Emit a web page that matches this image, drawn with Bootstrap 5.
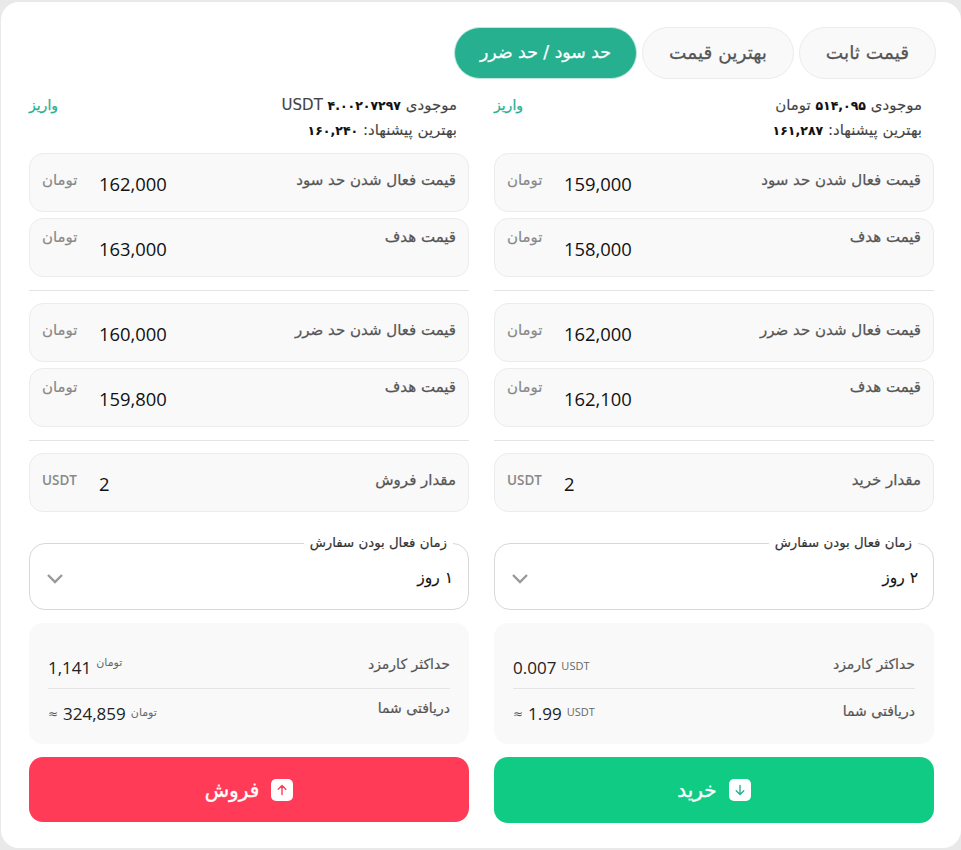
<!DOCTYPE html>
<html lang="fa" dir="rtl">
<head>
<meta charset="utf-8">
<title>سفارش</title>
<link href="https://cdn.jsdelivr.net/npm/bootstrap@5.3.0/dist/css/bootstrap.min.css" rel="stylesheet">
<style>
html,body{height:850px;overflow:hidden}
body{background:#e9e9e9;font-family:"DejaVu Sans","Open Sans",sans-serif;padding:2px 0 2px 1px;color:#444}
.shell{background:#fff;border-radius:18px;height:846px;padding:25px 25px 0 28px}
.tabs{height:52px;margin-bottom:14px;gap:5px}
.tab-pill{height:52px;border-radius:26px;border:1px solid #ececec;background:#f9f9f9;color:#555;font-size:18.5px;-webkit-text-stroke:.25px;display:flex;align-items:center;justify-content:center}
.w-a{width:137px}.w-b{width:152px}.w-c{width:183px}
.tab-pill.on{background:#27b08f;border-color:#bfe6dc;color:#fff;font-size:17.3px}
.trade-row{--bs-gutter-x:25px;margin-right:-10.5px}
.bal{height:48px;font-size:15px;line-height:24px;margin-bottom:12px;padding-right:12px;-webkit-text-stroke:.1px}
.bal b{color:#111;font-size:12.5px}
.bal a{color:#27b08f;text-decoration:none;font-size:14px;-webkit-text-stroke:.25px}
.fld{height:59px;background:#f9f9f9;border:1px solid #ececec;border-radius:14px;padding:0 12px;margin-bottom:6px;color:#555}
.fld-lab{font-size:15px;-webkit-text-stroke:.25px;white-space:nowrap}
.fld-unit{font-size:15px;-webkit-text-stroke:.15px;color:#888;min-width:38px;text-align:left}
.fld-num{font-family:"Open Sans",sans-serif;font-size:18.4px;color:#111;width:68px;direction:ltr;text-align:left;margin-left:19px}
.pad-mid{align-items:center}
.pad-mid .fld-lab,.pad-mid .fld-unit{margin-top:-5px}
.pad-mid .fld-num{margin-top:2px}
.pad-top{padding-top:7px;align-items:flex-start}
.pad-top .fld-num{margin-top:9px}
.fld .usd{font-family:"Open Sans",sans-serif;font-size:13.5px;font-weight:600;-webkit-text-stroke:0}
.rule{border-top:1px solid #e4e4e4;margin:13px 0 12px;height:0}
.time-box{border:1px solid #d8d8d8;border-radius:16px;height:76px;padding:0 15px 0 17px;margin:22px 0 13px;display:block;min-width:0}
.time-box legend{float:none;width:auto;font-size:13.3px;-webkit-text-stroke:.2px;color:#333;margin:0;padding:0 6px;line-height:18px}
.time-val{font-size:15.5px;-webkit-text-stroke:.15px;color:#111;margin-top:15px}
.info{background:#f9f9f9;border-radius:14px;height:121px;padding:24px 19px 0;margin-bottom:13px}
.info-row{height:41px;font-size:14px;-webkit-text-stroke:.2px;color:#555}
.info-row+.info-row{border-top:1px solid #e4e4e4;height:46px}
.info-row+.info-row>.info-gap{padding-top:4px}
.info-num{font-family:"Open Sans",sans-serif;font-size:17px;color:#222;direction:ltr;-webkit-text-stroke:0;line-height:1}
.info-unit{font-size:11px;color:#666;font-family:"Open Sans","DejaVu Sans",sans-serif;-webkit-text-stroke:0;margin-top:-2px}
.info-unit.up{margin-top:-10px}
.lab-up{margin-top:-6px}
.info-approx{font-size:12px;color:#555;-webkit-text-stroke:0}
.info-gap{gap:5px}
.go{height:66px;border:0;border-radius:14px;color:#fff;font-size:20px;-webkit-text-stroke:.35px;width:100%;gap:12px}
.go.buy{background:#10cb83}
.go.sell{background:#ff3b57;height:65px;margin-top:1px}
.go-ico{width:22px;height:22px;background:#fff;border-radius:5px}
</style>
</head>
<body>
<div class="shell">
  <div class="tabs d-flex">
    <div class="tab-pill w-a">قیمت ثابت</div>
    <div class="tab-pill w-b">بهترین قیمت</div>
    <div class="tab-pill w-c on">حد سود / حد ضرر</div>
  </div>
  <div class="row trade-row">
    <div class="col-6">
      <div class="bal d-flex justify-content-between">
        <div>موجودی <b>۵۱۴,۰۹۵</b> تومان<br>بهترین پیشنهاد: <b>۱۶۱,۲۸۷</b></div>
        <a href="#">واریز</a>
      </div>
      <div class="fld pad-mid d-flex justify-content-between"><span class="fld-lab">قیمت فعال شدن حد سود</span><span class="d-flex align-items-center"><span class="fld-num">159,000</span><span class="fld-unit">تومان</span></span></div>
      <div class="fld pad-top d-flex justify-content-between"><span class="fld-lab">قیمت هدف</span><span class="d-flex align-items-start"><span class="fld-num">158,000</span><span class="fld-unit">تومان</span></span></div>
      <div class="rule"></div>
      <div class="fld pad-mid d-flex justify-content-between"><span class="fld-lab">قیمت فعال شدن حد ضرر</span><span class="d-flex align-items-center"><span class="fld-num">162,000</span><span class="fld-unit">تومان</span></span></div>
      <div class="fld pad-top d-flex justify-content-between"><span class="fld-lab">قیمت هدف</span><span class="d-flex align-items-start"><span class="fld-num">162,100</span><span class="fld-unit">تومان</span></span></div>
      <div class="rule"></div>
      <div class="fld pad-mid d-flex justify-content-between"><span class="fld-lab">مقدار خرید</span><span class="d-flex align-items-center"><span class="fld-num">2</span><span class="fld-unit usd">USDT</span></span></div>
      <fieldset class="time-box">
        <legend>زمان فعال بودن سفارش</legend>
        <div class="time-val d-flex justify-content-between align-items-center"><span>۲ روز</span><svg width="16" height="10" viewBox="0 0 16 10" fill="none" stroke="#999" stroke-width="2.4"><path d="M1 1l7 7 7-7"/></svg></div>
      </fieldset>
      <div class="info">
        <div class="info-row d-flex justify-content-between align-items-center"><span class="lab-up">حداکثر کارمزد</span><span class="d-flex align-items-center info-gap"><span class="info-unit">USDT</span><span class="info-num">0.007</span></span></div>
        <div class="info-row d-flex justify-content-between align-items-center"><span>دریافتی شما</span><span class="d-flex align-items-center info-gap"><span class="info-unit">USDT</span><span class="info-num">1.99</span><span class="info-approx">≈</span></span></div>
      </div>
      <button type="button" class="go buy d-flex align-items-center justify-content-center"><span class="go-ico d-flex align-items-center justify-content-center"><svg width="14" height="14" viewBox="0 0 14 14" fill="none" stroke="#27b08f" stroke-width="1.4" stroke-linecap="round" stroke-linejoin="round"><path d="M7 2.5v9M3.2 7.8L7 11.5l3.8-3.7"/></svg></span><span>خرید</span></button>
    </div>
    <div class="col-6">
      <div class="bal d-flex justify-content-between">
        <div>موجودی <b>۴.۰۰۲۰۷۲۹۷</b> USDT<br>بهترین پیشنهاد: <b>۱۶۰,۲۴۰</b></div>
        <a href="#">واریز</a>
      </div>
      <div class="fld pad-mid d-flex justify-content-between"><span class="fld-lab">قیمت فعال شدن حد سود</span><span class="d-flex align-items-center"><span class="fld-num">162,000</span><span class="fld-unit">تومان</span></span></div>
      <div class="fld pad-top d-flex justify-content-between"><span class="fld-lab">قیمت هدف</span><span class="d-flex align-items-start"><span class="fld-num">163,000</span><span class="fld-unit">تومان</span></span></div>
      <div class="rule"></div>
      <div class="fld pad-mid d-flex justify-content-between"><span class="fld-lab">قیمت فعال شدن حد ضرر</span><span class="d-flex align-items-center"><span class="fld-num">160,000</span><span class="fld-unit">تومان</span></span></div>
      <div class="fld pad-top d-flex justify-content-between"><span class="fld-lab">قیمت هدف</span><span class="d-flex align-items-start"><span class="fld-num">159,800</span><span class="fld-unit">تومان</span></span></div>
      <div class="rule"></div>
      <div class="fld pad-mid d-flex justify-content-between"><span class="fld-lab">مقدار فروش</span><span class="d-flex align-items-center"><span class="fld-num">2</span><span class="fld-unit usd">USDT</span></span></div>
      <fieldset class="time-box">
        <legend>زمان فعال بودن سفارش</legend>
        <div class="time-val d-flex justify-content-between align-items-center"><span>۱ روز</span><svg width="16" height="10" viewBox="0 0 16 10" fill="none" stroke="#999" stroke-width="2.4"><path d="M1 1l7 7 7-7"/></svg></div>
      </fieldset>
      <div class="info">
        <div class="info-row d-flex justify-content-between align-items-center"><span class="lab-up">حداکثر کارمزد</span><span class="d-flex align-items-center info-gap"><span class="info-unit up">تومان</span><span class="info-num">1,141</span></span></div>
        <div class="info-row d-flex justify-content-between align-items-center"><span class="lab-up">دریافتی شما</span><span class="d-flex align-items-center info-gap"><span class="info-unit">تومان</span><span class="info-num">324,859</span><span class="info-approx">≈</span></span></div>
      </div>
      <button type="button" class="go sell d-flex align-items-center justify-content-center"><span class="go-ico d-flex align-items-center justify-content-center"><svg width="14" height="14" viewBox="0 0 14 14" fill="none" stroke="#ff3b57" stroke-width="1.4" stroke-linecap="round" stroke-linejoin="round"><path d="M7 11.5v-9M3.2 6.2L7 2.5l3.8 3.7"/></svg></span><span>فروش</span></button>
    </div>
  </div>
</div>
<script src="https://cdn.jsdelivr.net/npm/bootstrap@5.3.0/dist/js/bootstrap.bundle.min.js"></script>
</body>
</html>
